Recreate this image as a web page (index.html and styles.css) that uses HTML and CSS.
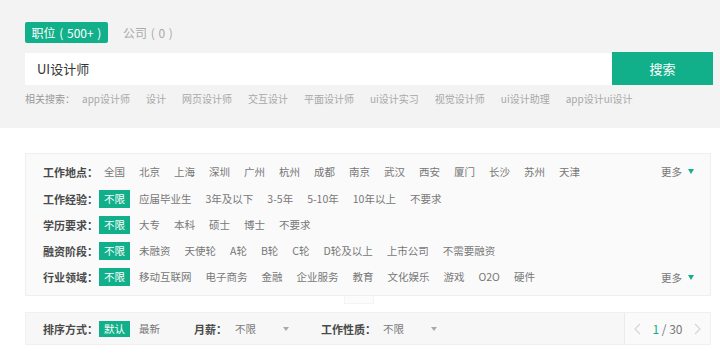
FILE: index.html
```html
<!DOCTYPE html>
<html lang="zh">
<head>
<meta charset="utf-8">
<link rel="stylesheet" href="styles.css">
</head>
<body>
<div class="top">
  <div class="tabs">
    <span class="tab active">职位 ( 500+ )</span>
    <span class="tab">公司 ( 0 )</span>
  </div>
  <div class="search">
    <div class="input">UI设计师</div>
    <div class="btn">搜索</div>
  </div>
  <div class="related">
    <span class="rl">相关搜索：</span>
    <span>app设计师</span><span>设计</span><span>网页设计师</span><span>交互设计</span><span>平面设计师</span><span>ui设计实习</span><span>视觉设计师</span><span>ui设计助理</span><span>app设计ui设计</span>
  </div>
</div>

<div class="filters">
  <div class="row">
    <span class="label">工作地点：</span>
    <div class="items">
      <span class="item">全国</span><span class="item">北京</span><span class="item">上海</span><span class="item">深圳</span><span class="item">广州</span><span class="item">杭州</span><span class="item">成都</span><span class="item">南京</span><span class="item">武汉</span><span class="item">西安</span><span class="item">厦门</span><span class="item">长沙</span><span class="item">苏州</span><span class="item">天津</span>
    </div>
    <span class="more">更多<i class="tri"></i></span>
  </div>
  <div class="row">
    <span class="label">工作经验：</span>
    <div class="items">
      <span class="item on">不限</span><span class="item">应届毕业生</span><span class="item">3年及以下</span><span class="item">3-5年</span><span class="item">5-10年</span><span class="item">10年以上</span><span class="item">不要求</span>
    </div>
  </div>
  <div class="row">
    <span class="label">学历要求：</span>
    <div class="items">
      <span class="item on">不限</span><span class="item">大专</span><span class="item">本科</span><span class="item">硕士</span><span class="item">博士</span><span class="item">不要求</span>
    </div>
  </div>
  <div class="row">
    <span class="label">融资阶段：</span>
    <div class="items">
      <span class="item on">不限</span><span class="item">未融资</span><span class="item">天使轮</span><span class="item">A轮</span><span class="item">B轮</span><span class="item">C轮</span><span class="item">D轮及以上</span><span class="item">上市公司</span><span class="item">不需要融资</span>
    </div>
  </div>
  <div class="row">
    <span class="label">行业领域：</span>
    <div class="items">
      <span class="item on">不限</span><span class="item">移动互联网</span><span class="item">电子商务</span><span class="item">金融</span><span class="item">企业服务</span><span class="item">教育</span><span class="item">文化娱乐</span><span class="item">游戏</span><span class="item">O2O</span><span class="item">硬件</span>
    </div>
    <span class="more">更多<i class="tri"></i></span>
  </div>
</div>
<div class="handle"></div>

<div class="sortbar">
  <span class="label">排序方式：</span>
  <span class="item on small">默认</span>
  <span class="item">最新</span>
  <span class="label2 salary">月薪：</span>
  <span class="sel">不限</span><i class="dtri"></i>
  <span class="label2 nature">工作性质：</span>
  <span class="sel">不限</span><i class="dtri"></i>
  <div class="pager">
    <svg class="chev" width="7" height="12" viewBox="0 0 7 12"><polyline points="6,1 1,6 6,11" fill="none" stroke="#d6d6d6" stroke-width="1.2"/></svg>
    <span class="pages"><b>1</b> / 30</span>
    <svg class="chev" width="7" height="12" viewBox="0 0 7 12"><polyline points="1,1 6,6 1,11" fill="none" stroke="#d6d6d6" stroke-width="1.2"/></svg>
  </div>
</div>
</body>
</html>
```

FILE: styles.css
```css
* { box-sizing: border-box; }
html, body {
  margin: 0;
  padding: 0;
  background: #fff;
  font-family: "Noto Sans CJK SC", "Noto Sans", sans-serif;
  width: 720px;
  overflow: hidden;
}

.top {
  height: 128px;
  background: #f3f3f3;
  padding: 22px 7px 0 25px;
}
.tabs {
  display: flex;
  align-items: center;
}
.tab {
  font-size: 12px;
  line-height: 21px;
  height: 21px;
  color: #aaa;
  margin-left: 15px;
  word-spacing: 1px;
}
.tab.active {
  width: 83px;
  margin-left: 0;
  text-align: center;
  background: #12b08a;
  color: #fff;
  border-radius: 2px;
}
.search {
  display: flex;
  align-items: flex-end;
  margin-top: 9px;
}
.input {
  width: 587px;
  height: 32px;
  background: #fff;
  font-size: 13px;
  line-height: 32px;
  color: #333;
  padding-left: 12px;
}
.btn {
  width: 101px;
  height: 33px;
  background: #12b08a;
  color: #fff;
  font-size: 13px;
  line-height: 33px;
  text-align: center;
}
.related {
  display: flex;
  margin-top: 7px;
  font-size: 10px;
  line-height: 14px;
  color: #a8a8a8;
  gap: 16px;
}
.related .rl {
  color: #999;
  margin-right: -9px;
}

.filters {
  margin: 25px 9px 0 25px;
  border: 1px solid #efefef;
  background: #fafafa;
  padding: 4px 16px 5px 17px;
}
.row {
  display: flex;
  align-items: center;
  height: 26px;
}
.row:first-child { height: 27px; }
.row:nth-child(2) { height: 27px; }
.label {
  width: 56px;
  flex: none;
  font-size: 11px;
  font-weight: bold;
  color: #4a4a4a;
  white-space: nowrap;
}
.items {
  display: flex;
  gap: 4px;
}
.item {
  font-size: 10.5px;
  line-height: 18px;
  padding: 0 5px;
  color: #777;
  white-space: nowrap;
}
.item.on {
  background: #12b08a;
  color: #fff;
}
.more {
  margin-left: auto;
  font-size: 10.5px;
  color: #777;
  display: flex;
  align-items: center;
}
.tri {
  display: inline-block;
  width: 0;
  height: 0;
  border-left: 3.5px solid transparent;
  border-right: 3.5px solid transparent;
  border-top: 5px solid #12b08a;
  margin-left: 6px;
}
.handle {
  width: 30px;
  height: 8px;
  margin: 0 auto;
  position: relative;
  left: -1px;
  border: 1px solid #f4f4f4;
  border-top: none;
  background: #fcfcfc;
}

.sortbar {
  margin: 8px 9px 0 25px;
  height: 33px;
  border: 1px solid #f0f0f0;
  background: #f7f7f7;
  display: flex;
  align-items: center;
  padding-left: 17px;
}
.sortbar .item.small {
  line-height: 16px;
  margin-right: 4px;
}
.label2 {
  font-size: 11px;
  font-weight: bold;
  color: #4a4a4a;
  white-space: nowrap;
}
.label2.salary { margin-left: 29px; }
.label2.nature { margin-left: 32px; }
.sel {
  font-size: 10.5px;
  color: #777;
  margin-left: 8px;
}
.label2.nature + .sel { margin-left: 7px; }
.dtri {
  display: inline-block;
  width: 0;
  height: 0;
  border-left: 3.5px solid transparent;
  border-right: 3.5px solid transparent;
  border-top: 4px solid #aaa;
  margin-left: 27px;
}
.pager {
  margin-left: auto;
  width: 86px;
  height: 100%;
  border-left: 1px solid #ebebeb;
  background: #fafafa;
  display: flex;
  align-items: center;
  justify-content: space-between;
  padding: 0 9px;
}
.pages {
  font-size: 12px;
  color: #777;
}
.pages b {
  font-weight: normal;
  color: #12b08a;
}
```
